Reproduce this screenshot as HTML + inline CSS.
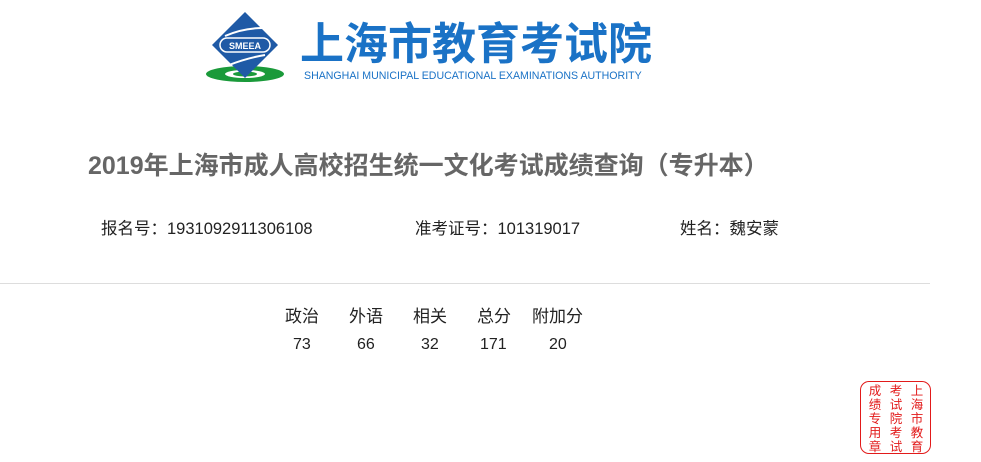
<!DOCTYPE html>
<html><head><meta charset="utf-8"><style>
body{margin:0;width:981px;height:462px;background:#fff;position:relative;overflow:hidden;font-family:"Liberation Sans","Noto Sans CJK SC",sans-serif;}
.a{position:absolute;white-space:nowrap;}
.st{position:absolute;left:860px;top:381px;width:69px;height:71px;border:1.5px solid #e21a1a;border-radius:9px;}
.st div{position:absolute;top:2px;width:14px;font-size:12.5px;line-height:14px;color:#e21a1a;text-align:center;}
</style></head><body>
<svg class="a" style="left:203px;top:10px" width="86" height="75" viewBox="0 0 86 75">
<ellipse cx="42" cy="64" rx="39" ry="8" fill="#1a9a3a"/>
<ellipse cx="42" cy="64" rx="20" ry="4" fill="#fff"/>
<ellipse cx="42" cy="64" rx="12" ry="2.5" fill="#1a9a3a"/>
<polygon points="42,2 75,35 42,68 9,35" fill="#1f5aa6"/>
<rect x="17" y="28" width="50" height="14" rx="7" fill="none" stroke="#fff" stroke-width="1.5"/>
<text x="42" y="39" font-size="9" font-weight="bold" fill="#fff" text-anchor="middle" font-family="Liberation Sans">SMEEA</text>
<path d="M22 26 Q40 18 60 18" stroke="#fff" stroke-width="2" fill="none"/>
<path d="M26 55 Q44 48 62 45" stroke="#fff" stroke-width="2" fill="none"/>
</svg>
<div class="a" style="left:300px;top:8px;font-size:44px;font-weight:bold;color:#1a72c6;letter-spacing:0px">上海市教育考试院</div>
<div class="a" style="left:304px;top:70px;font-size:10.6px;color:#1a72c6">SHANGHAI MUNICIPAL EDUCATIONAL EXAMINATIONS AUTHORITY</div>
<div class="a" style="left:88px;top:146px;font-size:25px;font-weight:bold;color:#666">2019年上海市成人高校招生统一文化考试成绩查询（专升本）</div>
<div class="a" style="left:101px;top:215px;font-size:16.5px;color:#222">报名号：1931092911306108</div>
<div class="a" style="left:415px;top:215px;font-size:16.5px;color:#222">准考证号：101319017</div>
<div class="a" style="left:680px;top:215px;font-size:16.5px;color:#222">姓名：魏安蒙</div>
<div class="a" style="left:0;top:283px;width:930px;height:1px;background:#ddd"></div>
<div class="a" style="left:285px;top:302px;font-size:17px;color:#222">政治</div>
<div class="a" style="left:349px;top:302px;font-size:17px;color:#222">外语</div>
<div class="a" style="left:413px;top:302px;font-size:17px;color:#222">相关</div>
<div class="a" style="left:477px;top:302px;font-size:17px;color:#222">总分</div>
<div class="a" style="left:532px;top:302px;font-size:17px;color:#222">附加分</div>
<div class="a" style="left:293px;top:336px;font-size:16px;color:#222">73</div>
<div class="a" style="left:357px;top:336px;font-size:16px;color:#222">66</div>
<div class="a" style="left:421px;top:336px;font-size:16px;color:#222">32</div>
<div class="a" style="left:480px;top:336px;font-size:16px;color:#222">171</div>
<div class="a" style="left:549px;top:336px;font-size:16px;color:#222">20</div>
<div class="st"><div style="left:7px">成绩专用章</div><div style="left:28px">考试院考试</div><div style="left:49px">上海市教育</div></div>
</body></html>
